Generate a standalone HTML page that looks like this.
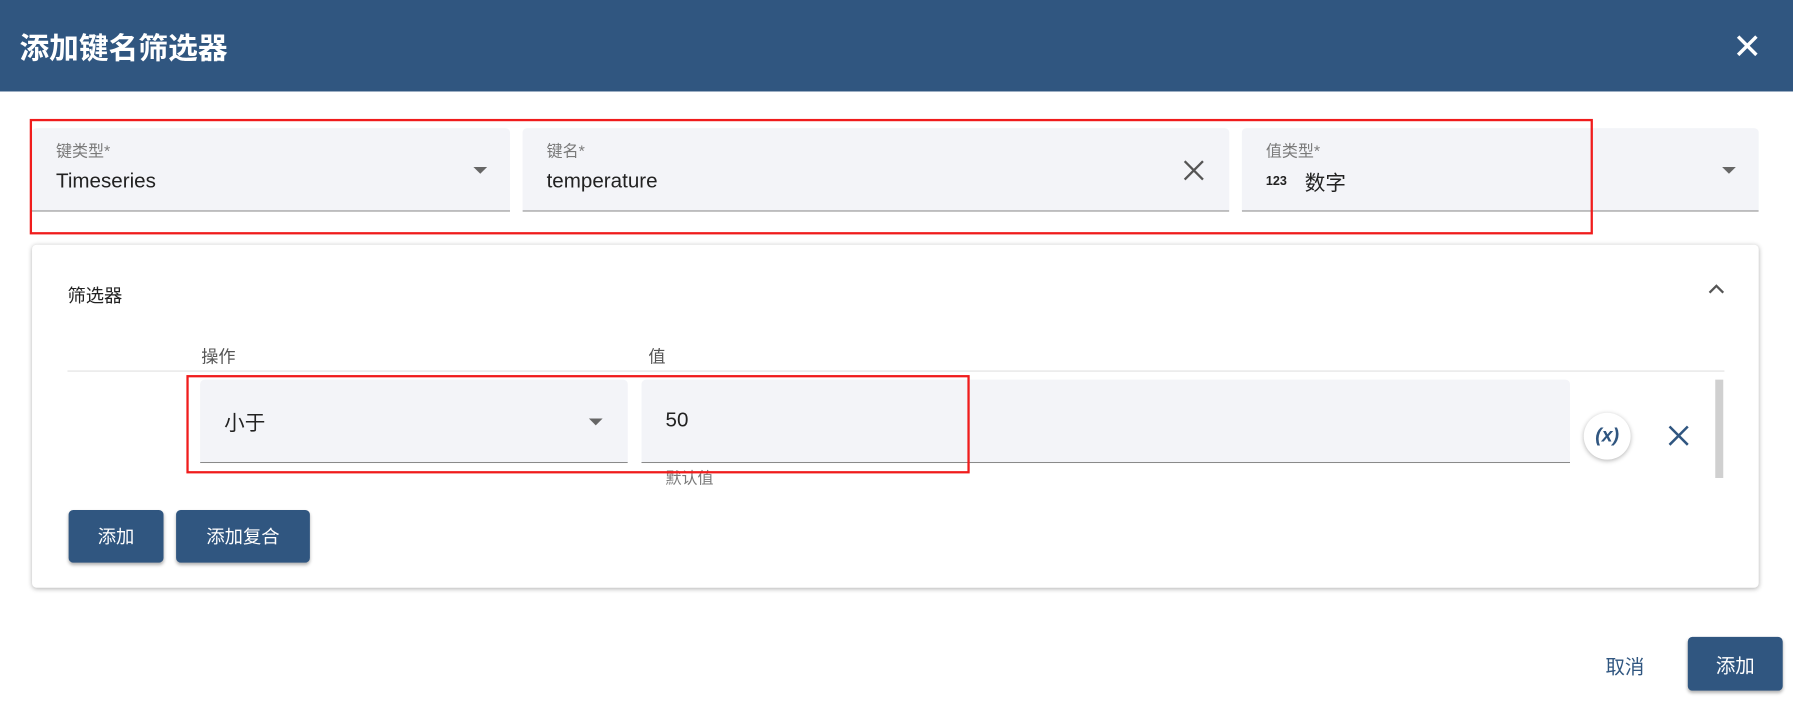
<!DOCTYPE html>
<html><head><meta charset="utf-8"><style>
html,body{margin:0;padding:0;width:1793px;height:700px;overflow:hidden;background:#fff;font-family:"Liberation Sans","Noto Sans CJK SC",sans-serif}
#w{position:absolute;left:0;top:0;width:1568px;height:613px;transform:scale(1.1435);transform-origin:0 0}
.a{position:absolute}
.f{position:absolute;background:#f3f4f8;border-bottom:1px solid #8a8a8a;border-radius:4px 4px 0 0}
.lab{position:absolute;font-size:14px;color:#7a7a7a}
.val{position:absolute;font-size:18px;color:#222}
.arr{position:absolute;width:0;height:0;border-left:6px solid transparent;border-right:6px solid transparent;border-top:6px solid #666}
.btn{position:absolute;background:#305680;color:#fff;font-size:16px;border-radius:4px;text-align:center;box-shadow:0 2px 3px rgba(0,0,0,.3)}
</style></head><body><div id="w">
<div class="a" style="left:0;top:0;width:1568px;height:80px;background:#305680"></div>
<div class="a" style="left:17px;top:22px;font-size:26px;color:#fff;font-weight:bold">添加键名筛选器</div>
<svg class="a" style="left:1517px;top:29px" width="22" height="22" viewBox="0 0 22 22"><path d="M3 3L19 19M19 3L3 19" stroke="#fff" stroke-width="3"/></svg>

<div class="f" style="left:28px;top:112px;width:418px;height:72px"></div>
<div class="lab" style="left:49px;top:122px">键类型*</div>
<div class="val" style="left:49px;top:148px">Timeseries</div>
<div class="arr" style="left:414px;top:146px"></div>
<div class="f" style="left:457px;top:112px;width:618px;height:72px"></div>
<div class="lab" style="left:478px;top:122px">键名*</div>
<div class="val" style="left:478px;top:148px">temperature</div>
<svg class="a" style="left:1034px;top:139px" width="20" height="20" viewBox="0 0 20 20"><path d="M2 2L18 18M18 2L2 18" stroke="#555" stroke-width="2"/></svg>
<div class="f" style="left:1086px;top:112px;width:452px;height:72px"></div>
<div class="lab" style="left:1107px;top:122px">值类型*</div>
<div class="a" style="left:1107px;top:153px;font-size:11px;font-weight:bold;color:#222">123</div>
<div class="val" style="left:1141px;top:146px">数字</div>
<div class="arr" style="left:1506px;top:146px"></div>
<div class="a" style="left:26px;top:104px;width:1363px;height:97px;border:2px solid #f01c1c"></div>

<div class="a" style="left:28px;top:214px;width:1510px;height:300px;background:#fff;border-radius:4px;box-shadow:0 1px 4px rgba(0,0,0,.3)"></div>
<div class="a" style="left:59px;top:245px;font-size:16px;color:#222">筛选器</div>
<svg class="a" style="left:1494px;top:248px" width="14" height="10" viewBox="0 0 14 10"><path d="M1 8L7 2L13 8" stroke="#555" stroke-width="2" fill="none"/></svg>
<div class="a" style="left:176px;top:301px;font-size:15px;color:#555">操作</div>
<div class="a" style="left:567px;top:301px;font-size:15px;color:#555">值</div>
<div class="a" style="left:59px;top:324px;width:1449px;height:1px;background:#e0e0e0"></div>
<div class="f" style="left:175px;top:332px;width:374px;height:72px"></div>
<div class="val" style="left:196px;top:356px">小于</div>
<div class="arr" style="left:515px;top:366px"></div>
<div class="f" style="left:561px;top:332px;width:812px;height:72px"></div>
<div class="val" style="left:582px;top:357px">50</div>
<div class="a" style="left:582px;top:408px;font-size:14px;color:#7a7a7a">默认值</div>
<div class="a" style="left:163px;top:328px;width:681px;height:82px;border:2px solid #f01c1c"></div>
<div class="a" style="left:1385px;top:361px;width:41px;height:41px;border-radius:50%;background:#fff;box-shadow:0 1px 4px rgba(0,0,0,.3);color:#305680;font-size:17px;font-style:italic;font-weight:bold;text-align:center;line-height:40px">(x)</div>
<svg class="a" style="left:1459px;top:372px" width="18" height="18" viewBox="0 0 18 18"><path d="M1 1L17 17M17 1L1 17" stroke="#305680" stroke-width="2.2"/></svg>
<div class="a" style="left:1500px;top:332px;width:7px;height:86px;background:#d0d0d0"></div>
<div class="btn" style="left:60px;top:446px;width:83px;height:46px;line-height:50px">添加</div>
<div class="btn" style="left:154px;top:446px;width:117px;height:46px;line-height:50px">添加复合</div>

<div class="a" style="left:1404px;top:569px;font-size:17px;color:#305680">取消</div>
<div class="btn" style="left:1476px;top:557px;width:83px;height:47px;line-height:51px;font-size:17px">添加</div>
</div></body></html>
